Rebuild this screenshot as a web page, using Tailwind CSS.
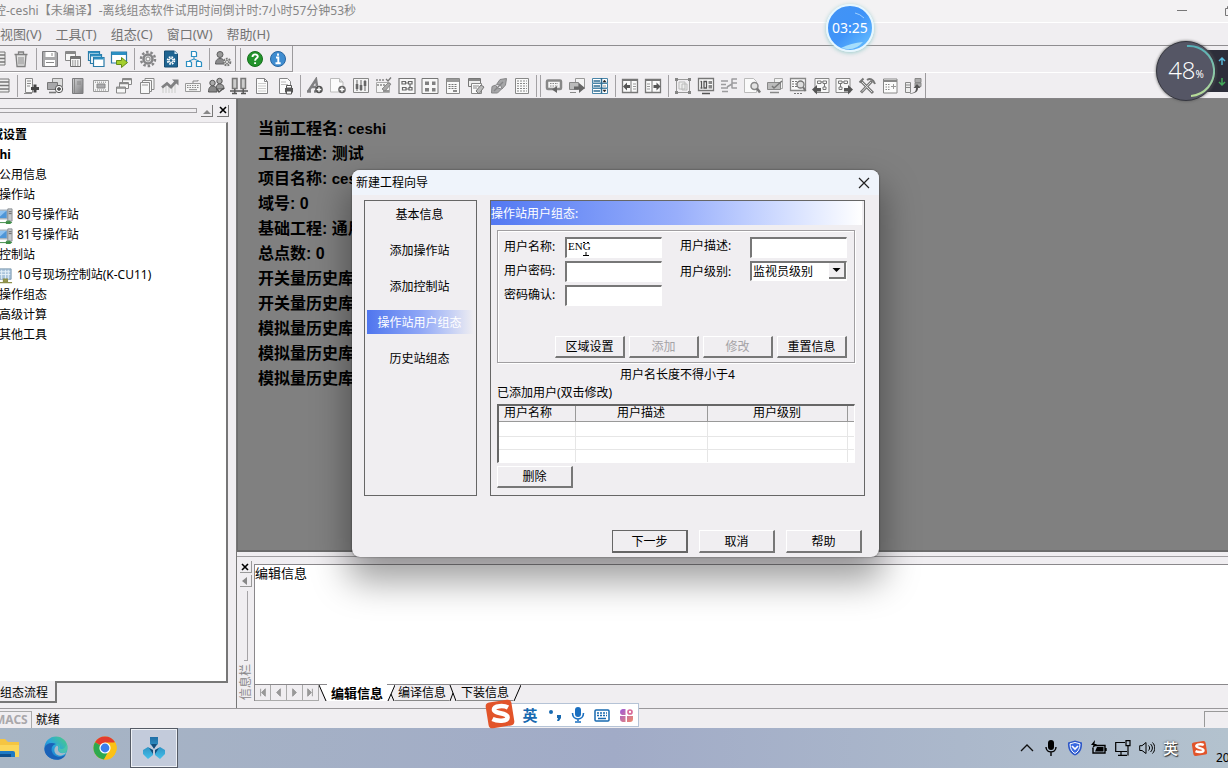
<!DOCTYPE html>
<html lang="zh-CN">
<head>
<meta charset="utf-8">
<meta name="viewport" content="width=device-width, initial-scale=1">
<title>离线组态软件</title>
<script src="https://cdn.jsdelivr.net/npm/@tailwindcss/browser@4"></script>
</head>
<body class="h-screen overflow-hidden bg-[#f0eef1] font-['Noto_Sans','Noto_Sans_CJK_SC',sans-serif] text-xs text-black">

<!-- icon library -->
<svg class="absolute h-0 w-0" aria-hidden="true" xmlns="http://www.w3.org/2000/svg">
  <defs>
    <linearGradient id="g-steel" x1="0" y1="0" x2="1" y2="1"><stop offset="0" stop-color="#d4d4d6"/><stop offset="1" stop-color="#7c7c7e"/></linearGradient>
    <linearGradient id="g-edge" x1="0" y1="1" x2="1" y2="0"><stop offset="0" stop-color="#1565c8"/><stop offset=".5" stop-color="#2aa6dc"/><stop offset="1" stop-color="#4fd07a"/></linearGradient>
    <linearGradient id="g-app" x1="0" y1="0" x2="0" y2="1"><stop offset="0" stop-color="#1f6ea6"/><stop offset="1" stop-color="#43c0ea"/></linearGradient>
    <linearGradient id="g-petal" x1="0" y1="0" x2="1" y2="1"><stop offset="0" stop-color="#a05ad8"/><stop offset="1" stop-color="#f08a6a"/></linearGradient>
  </defs>
  <symbol id="grid" viewBox="0 0 18 18"><path d="M0 2h16v13H0z" fill="#eee" stroke="#777"/><path d="M0 5h16M0 8.500h16M0 12h16" stroke="#777" stroke-width="1.500"/></symbol>
  <symbol id="trash" viewBox="0 0 18 18"><path d="M2.500 4.500h13M6.500 4V2h5v2M4 5l1 11.500h8L14 5" fill="#e2e2e2" stroke="#808080" stroke-width="1.300"/><path d="M7 7v7.500M9 7v7.500M11 7v7.500" stroke="#888"/></symbol>
  <symbol id="save" viewBox="0 0 18 18"><path d="M1.500 1.500H15l1.500 1.500v13.500h-15z" fill="#a9a9ab" stroke="#7c7c7e"/><path d="M4.500 2h9v5h-9zM4 10h10v6H4z" fill="#fff"/><path d="M5 12.500h8M11 3v3" stroke="#888"/></symbol>
  <symbol id="calc" viewBox="0 0 18 18"><path d="M1.500 1.500h10v9h-10z" fill="#f7f7f7" stroke="#888"/><path d="M2 3h9" stroke="#888" stroke-width="2"/><path d="M6.500 6.500h10v10h-10z" fill="#f7f7f7" stroke="#707070"/><path d="M7 8h9" stroke="#777" stroke-width="2"/><path d="M8 11h7M8 13h7M8 15h7" stroke="#777" stroke-dasharray="1.500 1"/></symbol>
  <symbol id="windows" viewBox="0 0 18 18"><g fill="#fff" stroke="#2b7ba8" stroke-width="1.200"><path d="M1.500 1.500h11v9h-11z"/><path d="M3.500 4.500h11v9h-11z"/><path d="M6.500 7.500h10.500v9H6.500z"/></g><path d="M2 2.500h10M4 5.500h10M7 8.500h9.500" stroke="#2b8fc2" stroke-width="1.800"/></symbol>
  <symbol id="export" viewBox="0 0 18 18"><path d="M1.500 2h15v11h-15z" fill="#fff" stroke="#2b7ba8" stroke-width="1.200"/><path d="M2 3.500h14" stroke="#2b8fc2" stroke-width="3"/><path d="M6.500 10.500h5v-3l6 5-6 5v-3h-5z" fill="#a4cf2e" stroke="#648c18"/></symbol>
  <symbol id="gear" viewBox="0 0 18 18"><circle cx="9" cy="9" r="7" fill="none" stroke="#858587" stroke-width="2.500" stroke-dasharray="2.500 1.900"/><circle cx="9" cy="9" r="4.500" fill="#d8d8da" stroke="#858587" stroke-width="2.500"/><circle cx="9" cy="9" r="2" fill="#f5f5f5" stroke="#888"/></symbol>
  <symbol id="docgear" viewBox="0 0 18 18"><path d="M2.500 1h10l3 3v13h-13z" fill="#1e6492" stroke="#174d73"/><path d="M12.500 1v3h3" fill="#cfe4f1"/><circle cx="9" cy="10.500" r="3.300" fill="none" stroke="#fff" stroke-width="2" stroke-dasharray="1.600 1"/><circle cx="9" cy="10.500" r="1.900" fill="none" stroke="#fff"/></symbol>
  <symbol id="network" viewBox="0 0 18 18"><path d="M6.500 1.500h4l1 1v4h-5zM1.500 11.500h4l1 1v4h-5zM11.500 11.500h4l1 1v4h-5z" fill="#fff" stroke="#2b8fc2" stroke-width="1.200"/><path d="M9 7v2L4 11M9 9l5 2" fill="none" stroke="#2b8fc2"/></symbol>
  <symbol id="usergear" viewBox="0 0 18 18"><circle cx="6" cy="4.500" r="3" fill="#999" stroke="#5c5c5e"/><path d="M1.500 14c0-4 2-5.500 4.500-5.500s4 1 5 5.500z" fill="#8b8b8d" stroke="#5c5c5e"/><circle cx="13" cy="12" r="3.300" fill="#e9e9e9" stroke="#777" stroke-width="2" stroke-dasharray="1.800 1"/><circle cx="13" cy="12" r="1.500" fill="#fff" stroke="#777"/></symbol>
  <symbol id="help" viewBox="0 0 18 18"><circle cx="9" cy="9" r="7.500" fill="#22932b" stroke="#17701d"/><path d="M6.500 7c0-3.500 5.300-3.300 5.300-.4 0 1.700-2.700 1.900-2.700 4.100M9.100 12.300v1.800" fill="none" stroke="#fff" stroke-width="1.900"/></symbol>
  <symbol id="info" viewBox="0 0 18 18"><circle cx="9" cy="9" r="7.500" fill="#3f8cd0" stroke="#2765a0"/><path d="M9 3.500v2.200M7 7.500h2.300v5M6.500 13.300h5.200" fill="none" stroke="#fff" stroke-width="1.900"/></symbol>
  <symbol id="srvadd" viewBox="0 0 18 18"><path d="M2.500 1.500h7v14h-7z" fill="#f6f6f6" stroke="#888"/><path d="M4 4h4M4 6.500h4M4 9h3M1 16.500h8" stroke="#888"/><path d="M12 7.500v8M8 11.500h8" stroke="#444" stroke-width="3"/></symbol>
  <symbol id="pcadd" viewBox="0 0 18 18"><path d="M6.500 1.500h10v8h-10z" fill="#ddd" stroke="#888"/><path d="M1.500 5.500h10v7h-10z" fill="#a8a8aa" stroke="#777"/><path d="M3 15.500h7" stroke="#777" stroke-width="1.600"/><circle cx="13" cy="12" r="3.700" fill="#f3f3f3" stroke="#555"/><path d="M13 10v4M11 12h4" stroke="#444" stroke-width="1.300"/></symbol>
  <symbol id="book" viewBox="0 0 18 18"><path d="M3.500 1.500h10.500v15H3.500z" fill="url(#g-steel)" stroke="#7c7c7e"/><path d="M5.500 2v14M8 5h4M8 7h4" stroke="#888"/></symbol>
  <symbol id="panel" viewBox="0 0 18 18"><path d="M1.500 3.500h15v11h-15z" fill="#f4f4f4" stroke="#999"/><path d="M5 7h8v4H5z" fill="#ababad" stroke="#888"/><path d="M3 5.200h12M3 13h12" stroke="#888" stroke-dasharray="1 1"/></symbol>
  <symbol id="cascade" viewBox="0 0 18 18"><g fill="#f7f7f7" stroke="#888"><path d="M7.500 1.500h9v6h-9z"/><path d="M4.500 5.500h9v6h-9z"/><path d="M1.500 10h9v6h-9z"/></g><path d="M8 2.500h8M5 6.500h8M2 11h8" stroke="#888" stroke-width="1.600"/></symbol>
  <symbol id="pages" viewBox="0 0 18 18"><g fill="#f7f7f7" stroke="#888"><path d="M7 1.500h9v11H7z"/><path d="M4.500 3.500h9v11h-9z"/><path d="M2.500 5.500h9v11h-9z"/></g><path d="M4 8h6" stroke="#999"/></symbol>
  <symbol id="trend" viewBox="0 0 18 18"><path d="M2 9v7M5 7v9M8 9v7M11 8v8M14 5v11" stroke="#ddd" stroke-width="2"/><path d="M1 10.500l5-4 4 3.500 5.500-6" fill="none" stroke="#808082" stroke-width="2.800"/><path d="M11 2.500h6.500v6z" fill="#808082"/></symbol>
  <symbol id="keyboard" viewBox="0 0 18 18"><path d="M1.500 6.500h15v8h-15z" fill="#f4f4f4" stroke="#999"/><path d="M3 8.500h12M3 10.500h12" stroke="#888" stroke-dasharray="1.500 1"/><path d="M5 12.700h8M9 6V4h5V3" fill="none" stroke="#888"/></symbol>
  <symbol id="users" viewBox="0 0 18 18"><g stroke="#555"><circle cx="12.500" cy="4" r="2.700" fill="#aaa"/><path d="M9 12c0-3 1-5 3.500-5s4.500 1 4.500 5z" fill="#999"/><circle cx="5.500" cy="6" r="2.700" fill="#aaa"/><path d="M1.500 15c0-4 1.500-6 4-6s4.500 1 4.500 6z" fill="#888"/></g><path d="M10 12l2 3 5-4" fill="none" stroke="#555" stroke-width="1.500"/></symbol>
  <symbol id="towers" viewBox="0 0 18 18"><path d="M2.500 1.500h4.500v10H2.500zM11 1.500h4.500v10H11z" fill="#ccc" stroke="#777" stroke-width="1.500"/><path d="M4.800 12v4M13.200 12v4M0 14h18M2 16.500h5M11 16.500h5" stroke="#555" stroke-width="1.400"/></symbol>
  <symbol id="sheet" viewBox="0 0 18 18"><path d="M3.500 1.500h8l3 3v12h-11z" fill="#fcfcfc" stroke="#858587"/><path d="M11.500 1.500v3h3" fill="none" stroke="#858587"/><path d="M5 6.500h8M5 9h8M5 11.500h8M5 14h8" stroke="#ccc"/></symbol>
  <symbol id="sheetprint" viewBox="0 0 18 18"><path d="M3.500 1.500h8l3 3v12h-11z" fill="#fcfcfc" stroke="#858587"/><path d="M5 5h5M5 7.500h7" stroke="#bbb"/><path d="M9 11h8v4.500H9z" fill="#555"/><path d="M10.500 8.500h5V11h-5zM10.500 14h5v3h-5z" fill="#fff" stroke="#555"/></symbol>
  <symbol id="fontadd" viewBox="0 0 18 18"><path d="M1 14.500h4M8 14.500h2M2.500 14L10 2.500 11 9M5 10h5" fill="none" stroke="#808082" stroke-width="2.500"/><circle cx="13" cy="12.500" r="3.800" fill="#555"/><path d="M13 10.200v4.600M10.700 12.500h4.600" stroke="#fff" stroke-width="1.400"/></symbol>
  <symbol id="docadd" viewBox="0 0 18 18"><path d="M1.500 1.500h9l3.500 3.500v10H1.500z" fill="#fbfbfb" stroke="#bbb"/><path d="M10.500 1.500V5H14" fill="#ddd" stroke="#bbb"/><circle cx="13" cy="12.500" r="3.800" fill="#666"/><path d="M13 10.200v4.600M10.700 12.500h4.600" stroke="#fff" stroke-width="1.400"/></symbol>
  <symbol id="sliders" viewBox="0 0 18 18"><path d="M1.500 1.500h15v14h-15z" fill="#f4f4f4" stroke="#888"/><path d="M5 3v11M9 3v11M13 3v11" stroke="#666"/><path d="M5 7v5M9 8v5M13 4v5" stroke="#666" stroke-width="2.600"/></symbol>
  <symbol id="checkedit" viewBox="0 0 18 18"><path d="M1.500 5.500h13v10h-13z" fill="#f4f4f4" stroke="#aaa"/><path d="M1 3h8M2 8h8" stroke="#888" stroke-width="1.400" stroke-dasharray="2 1"/><path d="M11 2l2 2 3-3.500M8 14h6" fill="none" stroke="#777" stroke-width="1.300"/><path d="M7 12l6-6 3 1-6 7z" fill="#aaa" stroke="#888"/></symbol>
  <symbol id="flow" viewBox="0 0 18 18"><path d="M1 1.500h16v15H1z" fill="#f7f7f7" stroke="#777" stroke-width="1.200"/><path d="M4 4.500h3.500V7H4zM10.500 4.500H14V7h-3.500zM4.500 10.500H8V13H4.500zM11 10.500h3V13h-3zM7.500 6h3M12 7v3.500M8 12h3" fill="none" stroke="#666" stroke-width="1.200"/></symbol>
  <symbol id="tiles" viewBox="0 0 18 18"><path d="M1 1.500h16v15H1z" fill="#f7f7f7" stroke="#777"/><path d="M4 4.500h4v3.500H4zM11 4.500h3.500v3.500H11zM4 11h4v3.500H4zM11 11h3.500v3.500H11z" fill="#808080"/></symbol>
  <symbol id="winlist" viewBox="0 0 18 18"><path d="M2.500 1.500h13v15h-13z" fill="#f9f9f9" stroke="#888"/><path d="M3 3.500h12" stroke="#999" stroke-width="3"/><path d="M4.500 7.500h9M4.500 9.500h9M4.500 11.500h9" stroke="#777" stroke-dasharray="2 1"/><path d="M9 14h4" stroke="#666" stroke-width="1.500"/></symbol>
  <symbol id="winedit" viewBox="0 0 18 18"><path d="M1.500 1.500h12v8h-12z" fill="#eee" stroke="#777"/><path d="M2 3h11" stroke="#888" stroke-width="2"/><path d="M4.500 6.500h10v10h-10z" fill="#fafafa" stroke="#888"/><path d="M6 9h6M6 11h4" stroke="#888"/><path d="M9 14l5-6 3 2-5 7z" fill="#bbb" stroke="#777"/></symbol>
  <symbol id="link" viewBox="0 0 18 18"><path d="M10 2.500l6.500-1-1 6.500-3.500 4-1.500-4-4-.5zM1.500 16l.5-6.500 3.500-1.500 2 3 4 1-4 4z" fill="#a6a6a8" stroke="#858587"/><path d="M4 14l9-9" stroke="#858587" stroke-width="1.500"/></symbol>
  <symbol id="report" viewBox="0 0 18 18"><path d="M2.500 1.500h13v15h-13z" fill="#fafafa" stroke="#888"/><path d="M4 4h10M4 6.500h10M4 9h10M4 11.500h10M4 14h10" stroke="#888" stroke-dasharray="2 1"/></symbol>
  <symbol id="loop" viewBox="0 0 18 18"><rect x="2" y="3.500" width="14" height="8.500" rx="1" fill="#f4f4f4" stroke="#888" stroke-width="2.500"/><path d="M5 6.500h8M5 9h8" stroke="#888" stroke-dasharray="1.500 1"/><path d="M12 9v7l-5-3.500z" fill="#666"/></symbol>
  <symbol id="send" viewBox="0 0 18 18"><path d="M7.500 1.500h9v10h-9z" fill="#f4f4f4" stroke="#999"/><path d="M1.500 5.500h9v7h-9z" fill="#bbb" stroke="#888"/><path d="M2 15.500h6" stroke="#888"/><path d="M6 9.500h5V6l6 5-6 5v-3.500H6z" fill="#666"/></symbol>
  <symbol id="combos" viewBox="0 0 18 18"><path d="M1.500 1.500h15v4.500h-15zM1.500 6.500h15V11h-15zM1.500 11.500h15V16.500h-15z" fill="#fff" stroke="#4a85a8"/><path d="M10.500 1v15.500M2.500 4h6.500M2.500 9h6.500M2.500 14h6.500" stroke="#2e6c92" stroke-width="1.500"/><path d="M12 5l1.500-2L15 5zM12 13l1.500 2L15 13zM12 9h3" fill="#222" stroke="#222" stroke-width=".5"/></symbol>
  <symbol id="dockleft" viewBox="0 0 18 18"><path d="M1.500 2.500h15v13h-15z" fill="#fafafa" stroke="#777" stroke-width="1.300"/><path d="M2 3.500h14M10 3v12" stroke="#777"/><path d="M12 7h3M12 9.500h3M12 12h3" stroke="#999"/><path d="M2 9.500l4-4v2.500h3v3H6v2.500z" fill="#555"/></symbol>
  <symbol id="dockright" viewBox="0 0 18 18"><path d="M1.500 2.500h15v13h-15z" fill="#fafafa" stroke="#777" stroke-width="1.300"/><path d="M2 3.500h14M8 3v12" stroke="#777"/><path d="M3 7h3M3 9.500h3M3 12h3" stroke="#999"/><path d="M16.500 9.500l-4-4v2.500h-3v3h3v2.500z" fill="#555"/></symbol>
  <symbol id="group" viewBox="0 0 18 18"><path d="M2.500 2.500h13v13h-13z" fill="none" stroke="#999"/><path d="M1 1h3v3H1zM14 1h3v3h-3zM1 14h3v3H1zM14 14h3v3h-3z" fill="#858585"/><path d="M5 5h6v7H5zM8 7h5v6H8z" fill="#eee" stroke="#bbb"/></symbol>
  <symbol id="digital" viewBox="0 0 18 18"><path d="M1.500 1.500h15v12h-15z" fill="#fafafa" stroke="#777" stroke-width="1.300"/><path d="M4.500 4v7M3.500 4.500h1M3.500 11h2M7 4.500h2.500V11H7zM5 16.500h8" fill="none" stroke="#555" stroke-width="1.300"/><path d="M11.500 4H15v3h-3.500zM11.500 8H15v3.500h-3.500z" fill="#888"/></symbol>
  <symbol id="branch" viewBox="0 0 18 18"><path d="M1 4h7M1 7.500h5M1 11h7M2 14.500h6M12 1.500v10M12 2h5M12 6h5M12 11h5M7 10l5-3" fill="none" stroke="#9c9c9e" stroke-width="1.500"/></symbol>
  <symbol id="docfind" viewBox="0 0 18 18"><path d="M1.500 1.500h9l3 3v11h-12z" fill="#fafafa" stroke="#bbb"/><circle cx="11.500" cy="9" r="3.500" fill="#e3e3e3" stroke="#888" stroke-width="1.500"/><path d="M14 11.500l3 4" stroke="#777" stroke-width="2.500"/></symbol>
  <symbol id="pcedit" viewBox="0 0 18 18"><path d="M8.500 1.500h8v10h-8z" fill="#f2f2f2" stroke="#aaa"/><path d="M1.500 5.500h13v7h-13z" fill="#bbb" stroke="#888"/><path d="M4 15.500h9" stroke="#888" stroke-width="1.500"/><path d="M6 9l2 2 8-7" fill="none" stroke="#777" stroke-width="1.500"/></symbol>
  <symbol id="pcfind" viewBox="0 0 18 18"><path d="M1.500 1.500h15v12h-15z" fill="#fafafa" stroke="#888" stroke-width="1.300"/><path d="M3 4.500h6M3 7h5M3 9.500h5M5 16.500h8" stroke="#777" stroke-dasharray="2 1"/><circle cx="11.500" cy="7.500" r="3.500" fill="#ddd" stroke="#777" stroke-width="1.300"/><path d="M14 10l2.500 4" stroke="#777" stroke-width="2"/></symbol>
  <symbol id="flowin" viewBox="0 0 18 18"><path d="M3 1.500h14v14H3z" fill="#f7f7f7" stroke="#888"/><path d="M5.500 4H9v2.500H5.500zM11 4h3.500v2.500H11zM11 10h3v2.500h-3zM9 5h2M12.500 6.500V10" fill="none" stroke="#777"/><path d="M0 12.500l5-4.500v3h4v3.500H5v3z" fill="#555"/></symbol>
  <symbol id="flowout" viewBox="0 0 18 18"><path d="M1 1.500h14v14H1z" fill="#f7f7f7" stroke="#888"/><path d="M3.500 4H7v2.500H3.500zM9 4h3.500v2.500H9zM4 10h3v2.500H4zM7 5h2M5.500 6.500V10" fill="none" stroke="#777"/><path d="M18 12.500L13 8v3H9v3.500h4v3z" fill="#555"/></symbol>
  <symbol id="tools" viewBox="0 0 18 18"><path d="M3 4l12 12M14 4L3 15.500" stroke="#777" stroke-width="3"/><path d="M4 5l10 10M13 5L4 14.500" stroke="#ddd"/><path d="M9 3c3-2 6-1 8 4M1.500 5.500l4-4" fill="none" stroke="#777" stroke-width="2"/></symbol>
  <symbol id="winplus" viewBox="0 0 18 18"><path d="M2.500 2h13.500v14H2.500z" fill="#fbfbfb" stroke="#888"/><path d="M3 4h13" stroke="#888" stroke-width="2"/><path d="M4.500 7.500h4M4.500 10h4M4.500 12.500h4" stroke="#888" stroke-dasharray="1.500 1"/><path d="M12.500 7v5M10 9.500h5" stroke="#999"/></symbol>
  <symbol id="transfer" viewBox="0 0 18 18"><path d="M1.500 5.500h5v10h-5z" fill="#eee" stroke="#888"/><path d="M2 8h4M2 10.500h4" stroke="#888"/><path d="M11 1.500h6v4h-6zM11 6h6v3.500h-6z" fill="#aaa" stroke="#888"/><path d="M6 16c5 0 6-2 6-5h-2.500L13 7l3.500 4H14c0 4-3 5.500-8 5.500z" fill="#555"/></symbol>
  <symbol id="station" viewBox="0 0 18 18"><path d="M0 3.500h12v9H0z" fill="#4f96d8" stroke="#a8b4c0" stroke-width="1.500"/><path d="M1 4l10 0-9 8z" fill="#8fc2f0"/><path d="M12.500 2h4.500v13h-4.500z" fill="#c4c8cc" stroke="#8a8f94"/><path d="M13.500 5h3M13.500 7h3" stroke="#666"/><path d="M4 16.500h13M11 15h4v3h-4z" fill="#4aa050" stroke="#3b8a45"/></symbol>
  <symbol id="control" viewBox="0 0 18 18"><path d="M2 2h14v11H2z" fill="#a9c4dc" stroke="#7e99b0"/><path d="M3 5h12M3 8h12M6 3v10M10 3v10M13 3v10" stroke="#e6f0f8"/><path d="M8 13h4v3H8zM1 16.500h16" fill="#9a9b50" stroke="#8d8f4a" stroke-width="1.500"/></symbol>
  <symbol id="sogou" viewBox="0 0 32 32"><rect x="3" y="3" width="26" height="26" rx="4" fill="#e2542a" transform="rotate(-9 16 16)"/><path d="M24 9.500c-4-2.200-14-2-14 2 0 4.500 14 3 13.500 8-.3 4-10 4-15 1.500" fill="none" stroke="#fff" stroke-width="4.600"/></symbol>
</svg>

<div class="relative flex h-full flex-col overflow-hidden">
  <!-- title bar -->
  <header class="flex h-[23px] shrink-0 items-center justify-between overflow-hidden border-b border-white bg-[#f3f2f3] text-[#858585]">
    <h1 class="-ml-1.5 whitespace-nowrap">控-ceshi【未编译】-离线组态软件试用时间倒计时:7小时57分钟53秒</h1>
    <div class="flex items-center gap-9">
      <button aria-label="最小化" class="h-4"><svg class="h-3 w-3" viewBox="0 0 12 12"><path d="M1 5.500h10" stroke="#777"/></svg></button>
      <button aria-label="最大化" class="-mr-2 h-4"><svg class="h-3 w-3" viewBox="0 0 12 12"><path d="M1.500 3.500h7v7h-7zM3.500 3V1.500h7v7H9" fill="none" stroke="#777"/></svg></button>
    </div>
  </header>

  <nav aria-label="菜单" class="flex h-[23px] shrink-0 items-center gap-3.5 overflow-hidden border-b border-[#8f8d90] pt-0.5 text-[13px] text-[#747474]">
    <button>视图(V)</button><button>工具(T)</button><button>组态(C)</button><button>窗口(W)</button><button>帮助(H)</button>
  </nav>

  <!-- toolbars -->
  <div class="flex h-[27px] shrink-0 border-b border-white">
    <div data-bar="1" class="flex items-center border-r border-b border-[#9c9a9d]"></div>
    <div data-bar="2" class="flex items-center border-r border-b border-[#9c9a9d] pr-0.5"></div>
  </div>
  <div class="flex h-[26px] shrink-0 border-b border-[#858386]">
    <div data-bar="3" class="flex items-center border-r border-[#9c9a9d]"></div>
  </div>

  <main class="flex min-h-0 flex-1">
    <!-- project tree -->
    <aside class="flex w-[237px] shrink-0 flex-col border-r border-[#777]">
      <div class="flex h-[23px] shrink-0 items-center gap-1 pr-[7px]">
        <div class="h-[5px] flex-1 border-y border-r border-[#a19fa2]"></div>
        <button aria-label="折叠" class="flex size-3 items-end justify-center border-r border-b border-[#777]"><svg class="h-2 w-2" viewBox="0 0 8 8"><path d="M0 6h8L4 2z" fill="#888"/></svg></button>
        <button aria-label="关闭面板" class="flex size-3 items-center justify-center border-r border-b border-[#777]"><svg class="h-2 w-2" viewBox="0 0 8 8"><path d="M1 1l6 6M7 1L1 7" stroke="#000" stroke-width="1.600"/></svg></button>
      </div>
      <ul class="mr-2 min-h-0 flex-1 overflow-hidden border-t border-r-2 border-t-[#d5d3d6] border-r-[#777] bg-white pt-0.5 leading-5 whitespace-nowrap">
        <li class="-ml-[9px] font-bold">域设置</li>
        <li class="-ml-5 font-bold">ceshi</li>
        <li class="-ml-px">公用信息</li>
        <li class="-ml-px">操作站</li>
        <li class="flex items-center gap-1"><svg class="-ml-1 size-[17px]"><use href="#station"/></svg>80号操作站</li>
        <li class="flex items-center gap-1"><svg class="-ml-1 size-[17px]"><use href="#station"/></svg>81号操作站</li>
        <li class="-ml-px">控制站</li>
        <li class="flex items-center gap-1"><svg class="-ml-1 size-[17px]"><use href="#control"/></svg>10号现场控制站(K-CU11)</li>
        <li class="-ml-px">操作组态</li>
        <li class="-ml-px">高级计算</li>
        <li class="-ml-px">其他工具</li>
      </ul>
      <div class="mr-2 flex h-[27px] shrink-0 items-start">
        <button class="h-[22px] border-r-2 border-b-2 border-[#777] pt-1 pr-[7px] whitespace-nowrap">组态流程</button>
        <div class="h-0.5 flex-1 bg-[#777]"></div>
      </div>
    </aside>

    <div class="flex min-w-0 flex-1 flex-col">
      <section class="flex-1 overflow-hidden border-b-2 border-l border-[#6c6c6c] bg-[#808080] pt-[17px] pl-5 text-base leading-[25px] font-bold font-['Liberation_Sans','Noto_Sans_CJK_SC',sans-serif]">
        <p>当前工程名: <span class="text-[15px]">ceshi</span></p>
        <p>工程描述: 测试</p>
        <p>项目名称: <span class="text-[15px]">ceshi</span></p>
        <p>域号: 0</p>
        <p>基础工程: 通用</p>
        <p>总点数: 0</p>
        <p>开关量历史库</p>
        <p>开关量历史库</p>
        <p>模拟量历史库</p>
        <p>模拟量历史库</p>
        <p>模拟量历史库</p>
      </section>

      <!-- message panel -->
      <section class="mt-1 flex h-[152px] shrink-0 border-t border-[#a09ea1] pb-[7px]">
        <div class="flex w-[17px] flex-col items-center gap-0.5 pt-1">
          <button aria-label="关闭信息栏" class="flex size-3 items-center justify-center border-r border-b border-[#999]"><svg class="h-2 w-2" viewBox="0 0 8 8"><path d="M1 1l6 6M7 1L1 7" stroke="#000" stroke-width="1.600"/></svg></button>
          <button aria-label="折叠信息栏" class="flex size-3 items-center justify-center border-r border-b border-[#999]"><svg class="h-2 w-2" viewBox="0 0 8 8"><path d="M6 0v8L1 4z" fill="#888"/></svg></button>
          <div class="mt-0.5 w-1 flex-1 border-r border-b border-[#a5a3a6]"></div>
          <div class="flex h-[38px] w-4 rotate-180 items-center justify-center leading-4 text-[#8a888b] [text-orientation:sideways] [writing-mode:vertical-rl]">信息栏</div>
        </div>
        <div class="mt-[7px] flex min-w-0 flex-1 flex-col border-t border-l border-[#8a888b] bg-white">
          <p class="flex-1 text-[13px] leading-4">编辑信息</p>
          <div class="flex h-[17px] items-stretch border-t border-[#8a888b] bg-[#f0eef1]">
            <button aria-label="首个" class="w-4 border-r border-b border-[#aaa]"><svg class="size-full" viewBox="0 0 16 16"><path d="M6 4v8M11 4v8L7 8z" fill="#999" stroke="#999"/></svg></button>
            <button aria-label="上一个" class="w-4 border-r border-b border-[#aaa]"><svg class="size-full" viewBox="0 0 16 16"><path d="M10 4v8L6 8z" fill="#999" stroke="#999"/></svg></button>
            <button aria-label="下一个" class="w-4 border-r border-b border-[#aaa]"><svg class="size-full" viewBox="0 0 16 16"><path d="M6 4v8l4-4z" fill="#999" stroke="#999"/></svg></button>
            <button aria-label="末个" class="w-4 border-r border-b border-[#aaa]"><svg class="size-full" viewBox="0 0 16 16"><path d="M10 4v8M5 4v8l4-4z" fill="#999" stroke="#999"/></svg></button>
            <div role="tablist" class="flex items-center leading-4">
              <svg class="h-4 w-2 bg-white" viewBox="0 0 8 16"><path d="M0 0v16h8z" fill="#f0eef1"/><path d="M0 0l7 16" stroke="#000"/></svg>
              <button role="tab" aria-selected="true" class="-mt-px h-[17px] bg-white px-1 text-[13px] leading-4 font-bold">编辑信息</button>
              <svg class="h-4 w-2 bg-white" viewBox="0 0 8 16"><path d="M8 0v16H0z" fill="#f0eef1"/><path d="M8 0L1 16M4 9l3 7" stroke="#000"/></svg>
              <button role="tab" aria-selected="false" class="h-4 border-b border-[#888] px-[3px] leading-[15px]">编译信息</button>
              <svg class="h-4 w-2" viewBox="0 0 8 16"><path d="M1 0l6 16M4 8L1 16" stroke="#000"/></svg>
              <button role="tab" aria-selected="false" class="h-4 border-b border-[#888] px-1 leading-[15px]">下装信息</button>
              <svg class="h-4 w-2" viewBox="0 0 8 16"><path d="M8 0L1 16" stroke="#000"/></svg>
            </div>
          </div>
        </div>
      </section>
    </div>
  </main>

  <!-- status bar -->
  <footer class="flex h-5 shrink-0 items-center justify-between border-t border-[#9a989b] pt-px">
    <div class="flex h-full items-center gap-1 overflow-hidden">
      <span class="-ml-1.5 border-t border-r border-[#aaa] pr-[3px] text-xs leading-4 font-bold text-[#aaa8ab]">MACS</span><span class="pt-0.5">就绪</span>
    </div>
    <span class="h-4 w-6 border-t border-l border-[#999]"></span>
  </footer>

  <!-- taskbar -->
  <div class="flex h-10 shrink-0 items-stretch justify-between overflow-hidden bg-linear-to-r from-[#a7b5c4] via-[#a1abc7] to-[#b3c2ce]">
    <div class="flex items-center">
      <button aria-label="资源管理器" class="w-5"><svg class="h-6 w-5" viewBox="0 0 20 24"><path d="M0 3h5l3 3h11v15H0z" fill="#f5c542"/><path d="M0 9h19v12H0z" fill="#fbd75b"/><path d="M0 15h13q2 0 2 2v4H0z" fill="#1e7ac4"/><path d="M0 18h11v3H0z" fill="#0f4f8c"/></svg></button>
      <button aria-label="Edge" class="ml-6"><svg class="size-6" viewBox="0 0 24 24"><circle cx="12" cy="12" r="11.500" fill="url(#g-edge)"/><path d="M.500 12C2 7 8 6 12 8c-5 1-6 7-2 11 4 3 9 2 12-1-2 5-8 7-13 5C3 21 0 17 .500 12z" fill="#1a62b8"/><path d="M12 8c3 1 4 3 2.500 5.500C14 16 17 17.500 20 17c2-.5 3.500-3 3.500-5 0-2-.5-3-1-4-1 5-5 6-7 4 1-2-.5-4-3.500-4z" fill="#58cfa0" opacity=".6"/><path d="M13 9.500c2 1 1 3 1 4.500.5 3 4 4 8 2.500-3 4-8 4-10.500 1-2-3-1-6.500 1.500-8z" fill="#a9bac9"/></svg></button>
      <button aria-label="Chrome" class="ml-[25px]"><svg class="size-6" viewBox="0 0 24 24"><circle cx="12" cy="12" r="11.500" fill="#fbc116"/><path d="M12 12L2 6.300A11.500 11.500 0 0 1 22 6.300z" fill="#e33b2e"/><path d="M12 12L2 6.300A11.500 11.500 0 0 0 11 23.500l5-8.500z" fill="#2da94f"/><path d="M12 6.500h10.200A11.500 11.500 0 0 1 11 23.500l5-9z" fill="#fbc116"/><circle cx="12" cy="12" r="5.600" fill="#fff"/><circle cx="12" cy="12" r="4.400" fill="#3b7ded"/></svg></button>
      <button aria-label="MACS 组态" class="ml-[13px] flex h-full w-12 items-center justify-center border border-[#555b66] bg-[#c3cbdb] shadow-[inset_0_0_0_1px_#eef1f6]"><svg class="size-6" viewBox="0 0 24 24"><path d="M8 1h8v7l-4 4-4-4zM1 14l5-3 5 3v5l-5 4-5-5zM23 14l-5-3-5 3v5l5 4 5-5z" fill="url(#g-app)"/><path d="M9 8h6l-3 5zM7 12l4 2v4zM17 12l-4 2v4z" fill="#134d7a"/></svg></button>
    </div>
    <div class="flex items-center gap-2">
      <button aria-label="显示隐藏的图标"><svg class="size-4" viewBox="0 0 16 16"><path d="M2 11l6-6 6 6" fill="none" stroke="#111" stroke-width="1.300"/></svg></button>
      <svg class="size-4" viewBox="0 0 16 16"><rect x="5" y="0" width="6" height="10" rx="3"/><path d="M3 7c0 6.500 10 6.500 10 0M8 12v4" fill="none" stroke="#000" stroke-width="1.400"/></svg>
      <svg class="size-4" viewBox="0 0 16 16"><path d="M8 .5l7 2C15.500 9 13 13.500 8 15.500 3 13.500.5 9 1 2.500z" fill="#2d57c8"/><path d="M8 2.500l5 1.300C13 9 11 12 8 13.500 5 12 3 9 3 3.800z" fill="#3c6ae0" stroke="#fff"/><path d="M5 6l3 3 3-3" fill="none" stroke="#fff" stroke-width="1.700"/></svg>
      <svg class="size-4" viewBox="0 0 16 16"><path d="M3 5.500h11v7.500H2v-5M15 8v3" fill="none" stroke="#000" stroke-width="1.400"/><path d="M6 7h6.500v4.500H4z"/><path d="M4 0L0 5h2.500L1 9l5-5H3.500z"/></svg>
      <svg class="size-4" viewBox="0 0 16 16"><path d="M10 2.500H.700v9H12M6 12v3M3 15.300h9" fill="none" stroke="#000" stroke-width="1.200"/><path d="M11 .700h4v5h-4zM13 6v9.500" fill="none" stroke="#000" stroke-width="1.200"/></svg>
      <svg class="size-4" viewBox="0 0 16 16"><path d="M.700 5.700H3L7 2.500v11L3 10.500H.700zM9.500 5.500c1.500 1.500 1.500 3.500 0 5M11.500 4c2.500 2.500 2.500 5.500 0 8M13.500 2.500c3 3 3 8 0 11" fill="none" stroke="#000"/></svg>
      <span class="w-4 text-[15px] leading-5 font-medium text-white [text-shadow:0_0_2px_#333,1px_1px_1px_#333]">英</span>
      <svg class="ml-1 size-[17px]"><use href="#sogou"/></svg>
      <time class="w-3 self-end overflow-hidden text-xs leading-5">2024</time>
    </div>
  </div>

  <!-- project wizard window -->
  <div role="dialog" aria-labelledby="dlg-title" class="absolute top-[170px] left-[352px] flex h-[387px] w-[527px] flex-col overflow-visible rounded-lg bg-[#f0eef1] shadow-[0_20px_36px_4px_rgba(0,0,0,0.38),0_0_2px_rgba(0,0,0,0.5)]">
    <div class="flex h-[25px] items-center justify-between rounded-t-lg bg-[#eff4fb] pr-2 pl-1">
      <h2 id="dlg-title">新建工程向导</h2>
      <button aria-label="关闭" class="size-3.5"><svg class="size-3.5" viewBox="0 0 14 14"><path d="M2 2l10 10M12 2L2 12" stroke="#222" stroke-width="1.200"/></svg></button>
    </div>
    <div class="mx-3 mt-[5px] mr-3.5 flex h-[296px] gap-[13px] leading-4">
      <nav aria-label="向导步骤" class="flex w-[113px] flex-col gap-3 border border-[#666] px-0.5 pt-px">
        <button class="h-6 pt-0.5 pr-0.5">基本信息</button>
        <button class="h-6 pt-0.5 pr-0.5">添加操作站</button>
        <button class="h-6 pt-0.5 pr-0.5">添加控制站</button>
        <button aria-current="step" class="h-6 bg-linear-to-r from-[#4f75ee] via-[#8fa6f6] to-[#f0eef1] pt-0.5 pr-0.5 text-white">操作站用户组态</button>
        <button class="h-6 pt-0.5 pr-0.5">历史站组态</button>
      </nav>
      <section class="min-w-0 flex-1 border border-[#666]">
        <h3 class="mr-0.5 h-6 bg-linear-to-r from-[#5378f2] via-[#98aefb] to-white leading-[25px] text-white">操作站用户组态:</h3>
        <div class="mr-[9px] ml-1.5 mt-[5px] flex h-[133px] flex-col justify-between border border-[#a09ea1] pt-1.5 pr-[7px] pb-1 pl-1.5 shadow-[1px_1px_0_#fff,inset_1px_1px_0_#fff]">
          <div class="flex justify-between">
            <div class="relative grid grid-cols-[61px_97px] items-center gap-y-[3px]">
              <label for="u-name" class="-mt-0.5">用户名称:</label>
              <input id="u-name" value="ENG" class="h-[21px] min-w-0 border border-t-2 border-l-2 border-t-[#777] border-l-[#777] border-r-white border-b-white bg-white px-px pb-1 font-['Liberation_Serif',serif] text-[11px] leading-3 outline-none">
              <label for="u-pass" class="-mt-0.5">用户密码:</label>
              <input id="u-pass" type="password" class="h-[21px] min-w-0 border border-t-2 border-l-2 border-t-[#777] border-l-[#777] border-r-white border-b-white bg-white px-px outline-none">
              <label for="u-pass2" class="-mt-0.5">密码确认:</label>
              <input id="u-pass2" type="password" class="h-[21px] min-w-0 border border-t-2 border-l-2 border-t-[#777] border-l-[#777] border-r-white border-b-white bg-white px-px outline-none">
              <svg class="absolute top-1 left-[78px] h-4 w-2" viewBox="0 0 8 16"><path d="M1 1.500h2M5 1.500h2M1 14.500h6M4 11v3" stroke="#000"/></svg>
            </div>
            <div class="grid grid-cols-[70px_97px] content-start items-center gap-y-[3px]">
              <label for="u-desc" class="-mt-1">用户描述:</label>
              <input id="u-desc" class="h-[21px] min-w-0 border border-t-2 border-l-2 border-t-[#777] border-l-[#777] border-r-white border-b-white bg-white px-px outline-none">
              <label for="u-level" class="mt-0.5">用户级别:</label>
              <div class="relative h-5">
                <select id="u-level" class="h-5 w-full appearance-none border border-t-2 border-l-2 border-t-[#777] border-l-[#777] border-r-white border-b-white bg-white pl-px leading-4 outline-none"><option>监视员级别</option></select>
                <svg class="pointer-events-none absolute top-0.5 right-px h-4 w-[17px] border-r-2 border-b-2 border-[#777] bg-[#f0eef1]" viewBox="0 0 14 14"><path d="M3 5h8L7 9z"/></svg>
              </div>
            </div>
          </div>
          <div class="flex justify-end gap-1">
            <button class="h-[22px] w-[70px] border border-r-2 border-b-2 border-t-white border-l-white border-r-[#777] border-b-[#777]">区域设置</button>
            <button disabled class="h-[22px] w-[70px] border border-r-2 border-b-2 border-t-white border-l-white border-r-[#777] border-b-[#777] text-[#a5a3a6]">添加</button>
            <button disabled class="h-[22px] w-[70px] border border-r-2 border-b-2 border-t-white border-l-white border-r-[#777] border-b-[#777] text-[#a5a3a6]">修改</button>
            <button class="h-[22px] w-[70px] border border-r-2 border-b-2 border-t-white border-l-white border-r-[#777] border-b-[#777]">重置信息</button>
          </div>
        </div>
        <p class="mt-1 text-center">用户名长度不得小于4</p>
        <p class="mt-0.5 pl-1.5">已添加用户(双击修改)</p>
        <div class="mt-[3px] mr-[9px] ml-1.5 h-[59px] overflow-hidden border border-t-2 border-l-2 border-t-[#666] border-l-[#666] border-r-white border-b-white bg-white">
          <table class="w-full table-fixed border-collapse">
            <colgroup><col class="w-[76px]"><col class="w-[132px]"><col class="w-[140px]"><col></colgroup>
            <thead><tr class="h-[15px] bg-[#f0eef1] leading-[14px]">
              <th class="border-r border-b border-[#999] p-0 pl-[5px] text-left font-normal">用户名称</th>
              <th class="border-r border-b border-[#999] p-0 font-normal">用户描述</th>
              <th class="border-r border-b border-[#999] p-0 font-normal">用户级别</th>
              <th class="border-b border-[#999] p-0"></th>
            </tr></thead>
            <tbody>
              <tr class="h-[15px]"><td class="border-r border-b border-[#e6e6e6]"></td><td class="border-r border-b border-[#e6e6e6]"></td><td class="border-r border-b border-[#e6e6e6]"></td><td class="border-b border-[#e6e6e6]"></td></tr>
              <tr class="h-[13px]"><td class="border-r border-b border-[#e6e6e6]"></td><td class="border-r border-b border-[#e6e6e6]"></td><td class="border-r border-b border-[#e6e6e6]"></td><td class="border-b border-[#e6e6e6]"></td></tr>
              <tr class="h-[13px]"><td class="border-r border-[#e6e6e6]"></td><td class="border-r border-[#e6e6e6]"></td><td class="border-r border-[#e6e6e6]"></td><td></td></tr>
            </tbody>
          </table>
        </div>
        <button class="mt-[3px] ml-1.5 h-[22px] w-[76px] border border-r-2 border-b-2 border-t-white border-l-white border-r-[#777] border-b-[#777]">删除</button>
      </section>
    </div>
    <div class="mt-[34px] flex justify-end gap-[11px] pr-[17px]">
      <button class="h-[23px] w-[76px] border border-r-2 border-b-2 border-[#666] pt-px">下一步</button>
      <button class="h-[23px] w-[76px] border border-r-2 border-b-2 border-t-white border-l-white border-r-[#777] border-b-[#777] pt-px">取消</button>
      <button class="h-[23px] w-[76px] border border-r-2 border-b-2 border-t-white border-l-white border-r-[#777] border-b-[#777] pt-px">帮助</button>
    </div>
  </div>

  <!-- floating recording timer -->
  <div class="absolute top-1 left-[826px] flex size-12 items-center justify-center rounded-full border-2 border-[#e6f7ff] bg-linear-to-br from-[#4293f5] via-[#3f93f8] to-[#6cc4ff] font-['Noto_Sans',sans-serif] text-sm text-white shadow-[0_1px_4px_#9cc]">
    <svg class="absolute inset-0 size-full" viewBox="0 0 44 44"><path d="M27 7q5 1 9 5" fill="none" stroke="#9fd0ff"/><path d="M13 42q10-5 22-6-8 10-22 6z" fill="#a6defc"/></svg>
    <span class="relative">03:25</span>
  </div>

  <!-- floating system monitor -->
  <div class="absolute top-[50px] right-0 flex h-[42px] w-[30px] flex-col items-end justify-around bg-[#2d2e3a] pr-0.5">
    <svg class="h-3 w-2" viewBox="0 0 8 12"><path d="M4 10V3M1 6l3-3 3 3" fill="none" stroke="#58b7d8" stroke-width="1.500"/></svg>
    <svg class="h-3 w-2" viewBox="0 0 8 12"><path d="M4 2v7M1 6l3 3 3-3" fill="none" stroke="#43a85a" stroke-width="1.500"/></svg>
  </div>
  <div class="absolute top-[41px] right-3 flex size-[60px] items-center justify-center rounded-full border border-[#35363f] bg-[#555665] text-white shadow-[0_0_3px_#555]">
    <svg class="absolute inset-0 size-full" viewBox="0 0 58 58"><defs><linearGradient id="g-arc" x1="0" y1="0" x2="0" y2="1"><stop offset="0" stop-color="#55b0b8"/><stop offset="1" stop-color="#b8dc98"/></linearGradient></defs><path d="M30 4A25 25 0 0 1 34 54" fill="none" stroke="url(#g-arc)" stroke-width="2"/></svg>
    <span class="relative pb-0.5 text-2xl font-light font-['Open_Sans','Noto_Sans',sans-serif]">48</span><span class="relative mt-2 text-[10px]">%</span>
  </div>

  <!-- input method bar -->
  <div class="absolute top-[703px] left-[497px] flex h-6 w-[142px] items-center border border-[#b5c3d6] bg-white text-[#1769b0]">
    <svg class="absolute -top-1.5 -left-3.5 size-8"><use href="#sogou"/></svg>
    <button class="ml-6 w-4 text-[15px] font-bold leading-5">英</button>
    <button aria-label="标点" class="ml-2.5"><svg class="h-4 w-3.5" viewBox="0 0 14 16"><circle cx="3" cy="5" r="2" fill="#1769b0"/><path d="M9 8h4v3l-2 3h-2l1-3H9z" fill="#1769b0"/></svg></button>
    <button aria-label="语音" class="ml-2"><svg class="size-4" viewBox="0 0 16 16"><rect x="5" y="0" width="6" height="10" rx="3" fill="#1a6fc0"/><path d="M2.500 6c0 8 11 8 11 0M8 12v2M5 15h6" fill="none" stroke="#1a6fc0" stroke-width="1.600"/></svg></button>
    <button aria-label="软键盘" class="ml-2"><svg class="h-4 w-4" viewBox="0 0 16 16"><rect x="1" y="3" width="14" height="11" rx="1" fill="none" stroke="#1769b0" stroke-width="1.500"/><path d="M3 6h10M3 8.500h10" stroke="#1769b0" stroke-width="1.500" stroke-dasharray="2 1"/><path d="M4 11.500h8" stroke="#1769b0" stroke-width="1.500"/></svg></button>
    <button aria-label="工具箱" class="ml-2"><svg class="h-4 w-4" viewBox="0 0 16 16"><path d="M4.500 2h3v6H4a3 3 0 0 1-2-3 3 3 0 0 1 2.500-3zM2 9h5.500v6H4.500A3 3 0 0 1 2 12zM9 9h6v3a3 3 0 0 1-3 3H9z" fill="url(#g-petal)"/><circle cx="12" cy="5" r="2" fill="none" stroke="#d86a9a" stroke-width="1.700"/></svg></button>
  </div>
</div>

<script>
  // Toolbar contents: [icon, label]; "|" is a separator, "||" a separator followed by a grip.
  const bars = {
    1: [['grid', '属性', 'cut'], ['trash', '删除'], '|', ['save', '保存'], ['calc', '数据表'], ['windows', '全部窗口'], ['export', '导出'], '|', ['gear', '编译'], ['docgear', '生成文件'], ['network', '网络'], '|', ['usergear', '用户设置']],
    2: ['grip', ['help', '帮助'], ['info', '关于']],
    3: [['grid', '列表', 'edge'], '|', ['srvadd', '添加控制站'], ['pcadd', '添加操作站'], ['book', '手册'], ['panel', '面板'], ['cascade', '层叠'], ['pages', '页面'], ['trend', '趋势'], ['keyboard', '键盘'], ['users', '用户'], ['towers', '站点'], ['sheet', '报表'], ['sheetprint', '打印报表'], '|', ['fontadd', '添加文字'], ['docadd', '新建文件'], ['sliders', '参数'], ['checkedit', '检查'], ['flow', '流程图'], ['tiles', '分组'], ['winlist', '窗口列表'], ['winedit', '编辑窗口'], ['link', '连接'], ['report', '日志'], '||', ['loop', '循环'], ['send', '下装'], ['combos', '选项'], '|', ['dockleft', '左移'], ['dockright', '右移'], '|', ['group', '组合'], ['digital', '数字量'], ['branch', '分支'], ['docfind', '查找'], ['pcedit', '修改站'], ['pcfind', '查找站'], ['flowin', '导入流程'], ['flowout', '导出流程'], ['tools', '工具'], ['winplus', '新增窗口'], ['transfer', '传输']]
  };
  const line = '<span class="h-[22px] w-px bg-[#a3a1a4]"></span>';
  for (const [id, items] of Object.entries(bars)) {
    document.querySelector(`[data-bar="${id}"]`).innerHTML = items.map(it => {
      if (it === '|') return id === '3' ? `<span class="flex w-[7px] justify-center">${line}</span>` : `<span class="flex w-1.5 justify-center">${line}</span>`;
      if (it === '||') return `<span class="flex w-[9px] justify-evenly">${line}${line}</span>`;
      if (it === 'grip') return `<span class="flex w-2 justify-center">${line}</span>`;
      const size = it[2] === 'cut' ? 'w-2.5' : it[2] === 'edge' ? 'w-3.5' : 'w-[23px]';
      return `<button aria-label="${it[1]}" class="flex ${size} justify-end overflow-hidden pr-[3px]"><svg class="size-[18px] shrink-0"><use href="#${it[0]}"/></svg></button>`;
    }).join('');
  }
</script>
</body>
</html>
